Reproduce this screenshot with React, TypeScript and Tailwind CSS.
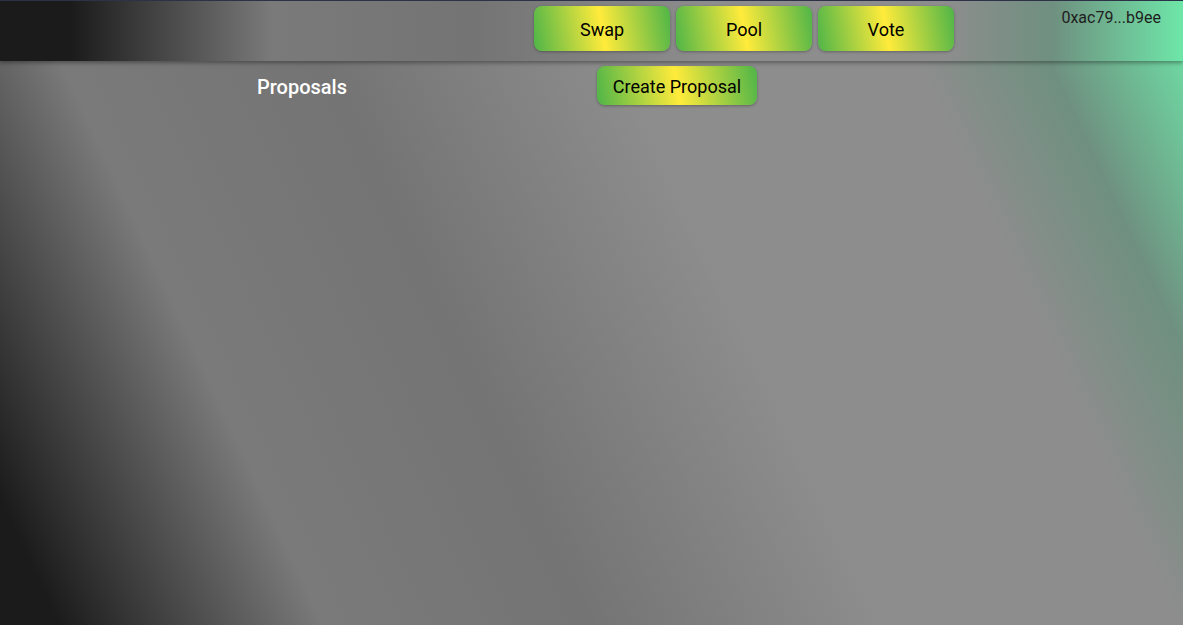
import React from 'react';

const navItems = ['Swap', 'Pool', 'Vote'];

const btn =
  'flex items-center justify-center rounded-lg bg-[linear-gradient(80deg,#4fb548_0%,#ffeb3b_50%,#4fb548_100%)] text-black shadow-[0_1px_3px_rgba(0,0,0,0.3)]';

export default function App() {
  return (
    <div
      className="min-h-[625px] w-full bg-[linear-gradient(65deg,#1b1b1b_0%,#1b1b1b_4%,#7a7a7a_22%,#747474_40%,#8d8d8d_60%,#8d8d8d_80%,#6f9080_89%,#6ee6a8_100%)] font-['Roboto','Liberation_Sans',sans-serif]"
    >
      {/* Header */}
      <header className="relative z-10 flex h-[61px] items-start border-t border-[#2e3249] bg-[linear-gradient(90deg,#1b1b1b_0%,#1b1b1b_6%,#7a7a7a_23%,#747474_40%,#8d8d8d_60%,#8d8d8d_80%,#6f9080_89%,#6ee6a8_100%)] pt-[5px] shadow-[0_2px_4px_rgba(0,0,0,0.35)]">
        <div className="flex-1" />
        <nav className="flex gap-[6px]">
          {navItems.map((item) => (
            <button key={item} className={`${btn} h-[45px] w-[136px] pt-[2px] text-[18px]`}>
              {item}
            </button>
          ))}
        </nav>
        <div className="w-[229px] pr-[22px] text-right text-[16px] leading-6 text-[#1e1e1e]">
          0xac79...b9ee
        </div>
      </header>

      {/* Proposals */}
      <section className="mt-[5px] flex items-center pl-[257px]">
        <h2 className="w-[340px] pt-[2px] text-[20px] font-medium text-white">Proposals</h2>
        <button className={`${btn} h-[39px] w-[160px] pt-px text-[18px]`}>Create Proposal</button>
      </section>
    </div>
  );
}
